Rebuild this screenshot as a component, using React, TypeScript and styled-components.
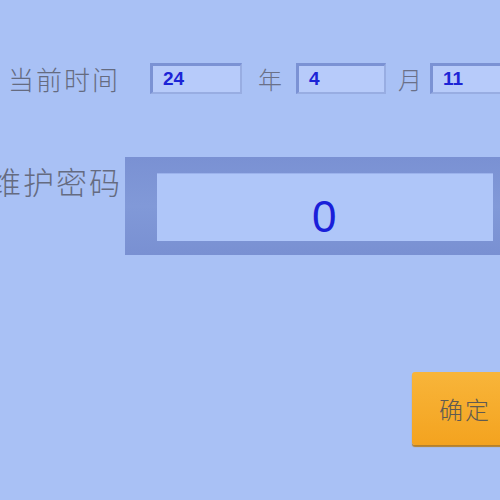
import React from 'react'
import styled, { createGlobalStyle } from 'styled-components'

const GlobalStyle = createGlobalStyle`
  html, body {
    margin: 0;
    padding: 0;
    background: #a9c1f5;
    overflow: hidden;
  }
`

const Screen = styled.div`
  width: 500px;
  height: 500px;
  background: #a9c1f5;
  font-family: 'Noto Sans CJK SC', 'Liberation Sans', sans-serif;
  position: relative;
  overflow: hidden;
`

const TimeRow = styled.div`
  display: flex;
  align-items: center;
  padding: 63px 0 0 8px;
  height: 31px;
  white-space: nowrap;
`

const Label = styled.span<{ size: number }>`
  font-size: ${({ size }) => size}px;
  font-weight: 300;
  color: #656b80;
  letter-spacing: 2px;
  line-height: 1;
`

const Unit = styled.span<{ before: number; after: number }>`
  font-size: 24px;
  font-weight: 300;
  color: #6a7088;
  line-height: 1;
  margin: 0 ${({ after }) => after}px 0 ${({ before }) => before}px;
`

const Field = styled.div<{ width: number }>`
  flex: none;
  box-sizing: border-box;
  width: ${({ width }) => width}px;
  height: 31px;
  border: 2px solid #7b92d4;
  border-left-width: 3px;
  border-top-width: 3px;
  border-right-color: #98ade2;
  border-bottom-color: #98ade2;
  background: #b7cbfa;
  display: flex;
  align-items: center;
  padding-left: 10px;
  font-family: 'Liberation Sans', Arial, sans-serif;
  font-weight: bold;
  font-size: 19px;
  color: #1c24d6;
`

const PasswordRow = styled.div`
  display: flex;
  align-items: flex-start;
  margin: 63px 0 0 -10px;
  white-space: nowrap;
`

const PasswordLabel = styled(Label)`
  padding-top: 8px;
  letter-spacing: 2px;
  width: 135px;
  flex: none;
`

const PasswordFrame = styled.div`
  flex: none;
  box-sizing: border-box;
  width: 390px;
  height: 98px;
  background: linear-gradient(180deg, #7a91d3 0%, #8199d8 50%, #7990d2 100%);
  padding: 16px 0 14px 32px;
  display: flex;
`

const PasswordInner = styled.div`
  flex: none;
  width: 336px;
  background: #afc6f9;
  border-top: 1px solid #9bb2ec;
  display: flex;
  align-items: center;
  padding: 18px 0 0 155px;
  box-sizing: border-box;
  font-family: 'Liberation Sans', Arial, sans-serif;
  font-size: 44px;
  color: #1a1fd9;
`

const ButtonRow = styled.div`
  display: flex;
  justify-content: flex-end;
  margin-top: 117px;
  margin-right: -10px;
`

const ConfirmButton = styled.button`
  width: 98px;
  height: 73px;
  border: none;
  border-radius: 3px;
  background: linear-gradient(180deg, #f8b53a 0%, #f4a31f 100%);
  box-shadow: 0 2px 1px #b6812a;
  font-family: 'Noto Sans CJK SC', sans-serif;
  font-size: 24px;
  font-weight: 300;
  color: #5f5a52;
  letter-spacing: 2px;
  text-align: left;
  padding: 0 0 0 27px;
`

const App = () => {
  return (
    <Screen>
      <GlobalStyle />
      <TimeRow>
        <Label size={26}>当前时间</Label>
        <Field width={92} style={{ marginLeft: 30 }}>24</Field>
        <Unit before={16} after={14}>年</Unit>
        <Field width={90}>4</Field>
        <Unit before={12} after={8}>月</Unit>
        <Field width={90}>11</Field>
      </TimeRow>
      <PasswordRow>
        <PasswordLabel size={31}>维护密码</PasswordLabel>
        <PasswordFrame>
          <PasswordInner>0</PasswordInner>
        </PasswordFrame>
      </PasswordRow>
      <ButtonRow>
        <ConfirmButton>确定</ConfirmButton>
      </ButtonRow>
    </Screen>
  )
}

export default App
